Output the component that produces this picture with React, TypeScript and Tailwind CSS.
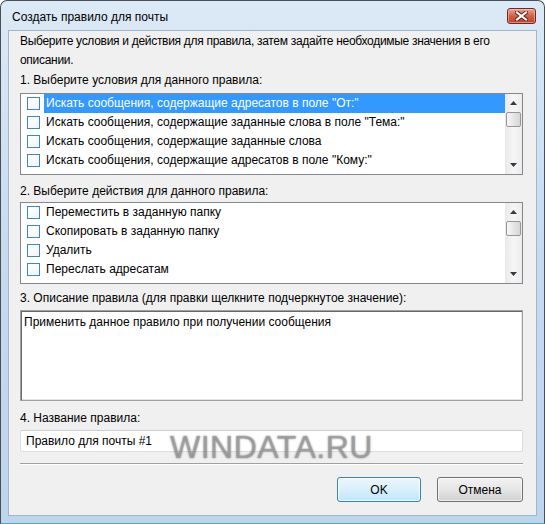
import React from "react";

function Check() {
  return (
    <span className="w-[13px] h-[13px] shrink-0 border border-[#3d87c9] bg-gradient-to-br from-[#ffffff] to-[#f1f5f9] box-border" />
  );
}

function Arrow({ up }: { up?: boolean }) {
  return (
    <svg width="7" height="4" viewBox="0 0 7 4">
      {up ? (
        <path d="M0 4 L3.5 0 L7 4 Z" fill="#3a3a3a" />
      ) : (
        <path d="M0 0 L7 0 L3.5 4 Z" fill="#3a3a3a" />
      )}
    </svg>
  );
}

function Scrollbar() {
  return (
    <div className="w-[17px] h-full shrink-0 bg-gradient-to-r from-[#e9e9e9] via-[#f6f6f6] to-[#ececec] flex flex-col items-center">
      <div className="h-[18px] w-full flex items-center justify-center">
        <Arrow up />
      </div>
      <div className="w-[15px] h-[15px] rounded-[2px] border border-[#969696] bg-gradient-to-r from-[#f7f7f7] to-[#d6d6d6]" />
      <div className="flex-1" />
      <div className="h-[18px] w-full flex items-center justify-center">
        <Arrow />
      </div>
    </div>
  );
}

function List({ items, selected }: { items: string[]; selected?: number }) {
  return (
    <div className="h-[82px] border border-[#828790] bg-white flex">
      <div className="flex-1 flex flex-col">
        {items.map((t, i) => (
          <div key={i} className="h-[19px] flex items-center pl-[6px]">
            <Check />
            <span
              className={
                i === selected
                  ? "ml-[4px] flex-1 h-[19px] leading-[19px] px-[2px] bg-[#3399ff] text-white whitespace-nowrap"
                  : "ml-[4px] flex-1 h-[19px] leading-[19px] px-[2px] whitespace-nowrap"
              }
            >
              {t}
            </span>
          </div>
        ))}
      </div>
      <Scrollbar />
    </div>
  );
}

export default function App() {
  return (
    <div className="w-[545px] h-[524px] relative font-['Liberation_Sans',Arial,sans-serif] text-[12px] text-black select-none">
      <div className="w-full h-full flex flex-col rounded-t-[7px] border border-[#4a4f57] border-b-[#3ab0c2] bg-gradient-to-b from-[#dce9f6] via-[#c6daf0] to-[#bfd5ec] overflow-hidden">
        <div className="h-[29px] shrink-0 flex items-center justify-between pl-[11px] pr-[8px]">
          <span className="leading-[16px] mt-[2px]">Создать правило для почты</span>
          <div className="w-[29px] h-[16px] mt-[0px] rounded-[3px] border border-[#6e2a20] bg-gradient-to-b from-[#e8a593] via-[#d0604a] to-[#c0412a] flex items-center justify-center shadow-[inset_0_0_0_1px_rgba(255,210,200,0.5)]">
            <svg width="13" height="10" viewBox="0 0 13 10">
              <path d="M2 1.5 L11 8.5 M11 1.5 L2 8.5" stroke="#5a1e14" strokeWidth="4" strokeLinecap="square" />
              <path d="M2 1.5 L11 8.5 M11 1.5 L2 8.5" stroke="#ffffff" strokeWidth="2.2" strokeLinecap="square" />
            </svg>
          </div>
        </div>
        <div className="flex-1 mx-[7px] mb-[7px] border border-[#9fb6cf] bg-[#f0f0f0] pl-[11px] pr-[13px] flex flex-col">
          <p className="leading-[19px] mt-[1px] whitespace-nowrap tracking-[-0.3px]">
            Выберите условия и действия для правила, затем задайте необходимые значения в его
            <br />
            описании.
          </p>
          <div className="leading-[16px] mt-[2px]">1. Выберите условия для данного правила:</div>
          <div className="mt-[5px]">
            <List
              selected={0}
              items={[
                'Искать сообщения, содержащие адресатов в поле "От:"',
                'Искать сообщения, содержащие заданные слова в поле "Тема:"',
                "Искать сообщения, содержащие заданные слова",
                'Искать сообщения, содержащие адресатов в поле "Кому:"',
              ]}
            />
          </div>
          <div className="leading-[16px] mt-[8px]">2. Выберите действия для данного правила:</div>
          <div className="mt-[3px]">
            <List
              items={[
                "Переместить в заданную папку",
                "Скопировать в заданную папку",
                "Удалить",
                "Переслать адресатам",
              ]}
            />
          </div>
          <div className="leading-[16px] mt-[6px]">
            3. Описание правила (для правки щелкните подчеркнутое значение):
          </div>
          <div className="mt-[4px] h-[91px] border border-[#a0a0a0] bg-white shadow-[inset_1px_1px_0_#696969,inset_-1px_-1px_0_#e3e3e3] px-[3px] pt-[3px] leading-[17px]">
            Применить данное правило при получении сообщения
          </div>
          <div className="leading-[16px] mt-[9px]">4. Название правила:</div>
          <div className="mt-[4px] h-[22px] border border-[#d8dde3] border-t-[#c9ced5] bg-white rounded-[2px] px-[5px] flex items-center">
            Правило для почты #1
          </div>
          <div className="mt-[11px] h-[2px] border-t border-[#a0a0a0] border-b border-b-white" />
          <div className="mt-[12px] flex justify-end gap-[16px]">
            <button className="w-[84px] h-[25px] rounded-[3px] border border-[#3c7fb1] bg-gradient-to-b from-[#eaf6fd] via-[#d9f0fc] to-[#bee6fd] shadow-[inset_0_0_0_1px_rgba(255,255,255,0.8)] leading-[16px]">
              OK
            </button>
            <button className="w-[86px] h-[25px] rounded-[3px] border border-[#707070] bg-gradient-to-b from-[#f2f2f2] via-[#e6e6e6] to-[#d0d0d0] shadow-[inset_0_0_0_1px_rgba(255,255,255,0.7)] leading-[16px]">
              Отмена
            </button>
          </div>
        </div>
      </div>
      <div className="absolute left-[170px] top-[431px] text-[32px] leading-[32px] font-['Liberation_Sans',sans-serif] text-[rgba(160,160,160,0.75)] [text-shadow:0_0_2px_rgba(70,70,70,0.7)] tracking-[0.5px] pointer-events-none">
        WINDATA.RU
      </div>
    </div>
  );
}
